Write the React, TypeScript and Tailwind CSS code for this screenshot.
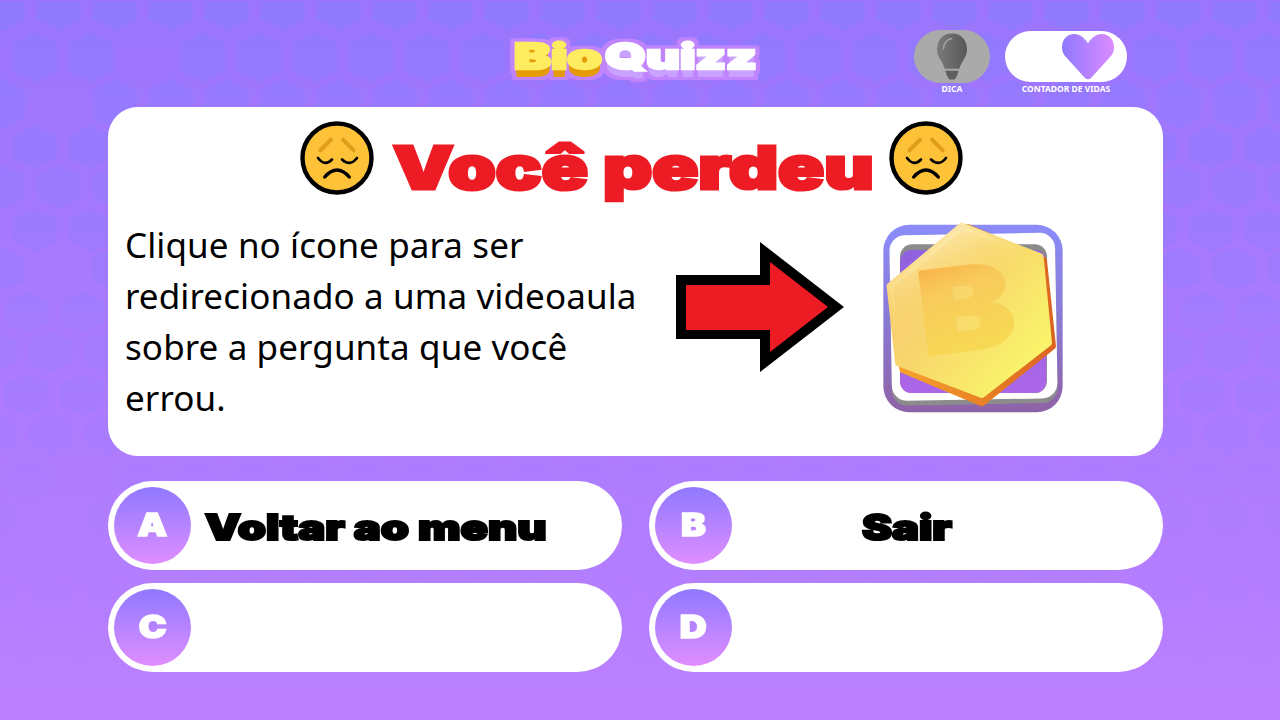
const hexRows: { y: number; h: number; start: number; skip: number[] }[] = [
  { y: 6, h: 50, start: 3, skip: [] },
  { y: 57, h: 50, start: 35, skip: [147] },
  { y: 104, h: 50, start: 3, skip: [59] },
  { y: 147, h: 43, start: 35, skip: [] },
  { y: 187, h: 43, start: 3, skip: [] },
  { y: 230, h: 42, start: 35, skip: [] },
  { y: 269, h: 42, start: 3, skip: [59] },
  { y: 312, h: 41, start: 27, skip: [] },
  { y: 352, h: 41, start: -5, skip: [] },
  { y: 395, h: 41, start: 27, skip: [] },
  { y: 435, h: 41, start: -5, skip: [] },
  { y: 478, h: 41, start: 27, skip: [83] },
  { y: 520, h: 41, start: -5, skip: [51] },
  { y: 560, h: 41, start: 27, skip: [] },
  { y: 602, h: 41, start: -5, skip: [] },
  { y: 644, h: 41, start: 27, skip: [] },
];

function hexPoints(cx: number, cy: number, h: number) {
  const t = cy - h / 2;
  const b = cy + h / 2;
  const s = h * 0.22;
  return `${cx},${t} ${cx + 22},${t + s} ${cx + 22},${b - s} ${cx},${b} ${cx - 22},${b - s} ${cx - 22},${t + s}`;
}

function HexBackground() {
  const hexes: string[] = [];
  hexRows.forEach((row) => {
    for (let x = row.start; x < 1310; x += 56) {
      if (!row.skip.includes(x)) hexes.push(hexPoints(x, row.y, row.h));
    }
  });
  return (
    <svg className="absolute inset-0" width="1280" height="720" viewBox="0 0 1280 720">
      <defs>
        <linearGradient id="hexFade" gradientUnits="userSpaceOnUse" x1="0" y1="0" x2="0" y2="680">
          <stop offset="0" stopColor="#877cff" stopOpacity="0.6" />
          <stop offset="0.55" stopColor="#9a7cff" stopOpacity="0.36" />
          <stop offset="1" stopColor="#ab7dff" stopOpacity="0" />
        </linearGradient>
        <clipPath id="hexClip">
          <rect x="0" y="2" width="1280" height="718" />
        </clipPath>
      </defs>
      <g clipPath="url(#hexClip)" fill="url(#hexFade)">
        {hexes.map((p) => (
          <polygon key={p} points={p} />
        ))}
      </g>
    </svg>
  );
}

function Logo() {
  return (
    <div className="mt-[39px] ml-[406px] h-[46px] w-[241px] flex items-start font-['Inter',sans-serif] font-black text-[35px] leading-[35px] [-webkit-text-stroke:2.5px_currentColor] [filter:drop-shadow(4px_0_0_#c084fc)_drop-shadow(-4px_0_0_#c084fc)_drop-shadow(0_-3px_0_#c084fc)_drop-shadow(0_3px_0_#c084fc)]">
      <div className="w-[91px] shrink-0">
        <span className="inline-block origin-left scale-x-[1.58] text-[#fdec60] [text-shadow:0_2px_0_#e59a08,0_4px_0_#e59a08,0_6px_0_#e59a08,0_8px_0_#e59a08]">Bio</span>
      </div>
      <div className="shrink-0">
        <span className="inline-block origin-left scale-x-[1.49] text-white [text-shadow:0_2px_0_#c9a2ff,0_4px_0_#c9a2ff,0_6px_0_#c9a2ff,0_8px_0_#c9a2ff]">Quizz</span>
      </div>
    </div>
  );
}

function Bulb() {
  return (
    <svg width="76" height="53" viewBox="42 30 228 158">
      <defs>
        <linearGradient id="bulbFill" x1="0" y1="0" x2="1" y2="0">
          <stop offset="0" stopColor="#7b7b7b" />
          <stop offset="1" stopColor="#575757" />
        </linearGradient>
      </defs>
      <path d="M156 40C126 40 111 62 111 88C111 112 128 122 134 146L178 146C184 122 201 112 201 88C201 62 186 40 156 40Z" fill="url(#bulbFill)" />
      <path d="M136 152H176L172 165L164 178H148L140 165Z" fill="#5f5f5f" />
      <path d="M130 86Q132 60 155 55" fill="none" stroke="#a3a3a3" strokeWidth="4" strokeLinecap="round" />
    </svg>
  );
}

function Heart() {
  return (
    <svg width="52" height="46" viewBox="0 0 154 136">
      <defs>
        <linearGradient id="heartFill" x1="0" y1="0" x2="1" y2="0">
          <stop offset="0" stopColor="#8f78ff" />
          <stop offset="1" stopColor="#dc8cff" />
        </linearGradient>
      </defs>
      <path d="M77 28C65 8 50 0 36 0C15 0 0 17 0 40C0 55 8 65 15 72L68 130Q77 138 86 130L139 72C146 65 154 55 154 40C154 17 139 0 118 0C104 0 89 8 77 28Z" fill="url(#heartFill)" />
    </svg>
  );
}

function SadFace() {
  return (
    <svg width="74" height="74" viewBox="0 0 74 74" className="shrink-0">
      <circle cx="37" cy="37" r="34.5" fill="#fdc238" stroke="#000" strokeWidth="4.4" />
      <path d="M20.3 29.3L31 18.7M43 18.7L53.7 29.3" fill="none" stroke="#e09c1a" strokeWidth="4" strokeLinecap="round" />
      <path d="M18 37Q25 46 32 38.5M42 38.5Q50 46 57 37" fill="none" stroke="#000" strokeWidth="2.6" strokeLinecap="round" />
      <path d="M24.7 56Q37 42 49.3 56" fill="none" stroke="#000" strokeWidth="3.4" strokeLinecap="round" />
    </svg>
  );
}

function RedArrow() {
  return (
    <svg width="169" height="130" viewBox="676 242 169 130" className="shrink-0 mt-[21px]">
      <polygon points="676,275 760,275 760,242 844,307 760,372 760,339 676,339" fill="#000" />
      <polygon points="686,285 770,285 770,262 828,307 770,352 770,330 686,330" fill="#ed1c24" />
    </svg>
  );
}

function CoinIcon() {
  const hex = "905,48 1140,140 1165,398 965,553 715,458 690,228";
  return (
    <svg width="187" height="197" viewBox="660 30 560 590" className="shrink-0 ml-[35px] -mt-[1px]">
      <defs>
        <linearGradient id="frame" x1="0" y1="0" x2="0" y2="1">
          <stop offset="0" stopColor="#8b8cfb" />
          <stop offset="0.55" stopColor="#8a78cf" />
          <stop offset="1" stopColor="#8f62a6" />
        </linearGradient>
        <linearGradient id="inner" x1="0" y1="0" x2="0" y2="1">
          <stop offset="0" stopColor="#8f62df" />
          <stop offset="1" stopColor="#ac66e8" />
        </linearGradient>
        <linearGradient id="coinFace" x1="0.1" y1="0.15" x2="0.85" y2="0.8">
          <stop offset="0" stopColor="#f8c878" />
          <stop offset="0.45" stopColor="#f8d66c" />
          <stop offset="1" stopColor="#f9f26a" />
        </linearGradient>
        <linearGradient id="coinTop" x1="0.3" y1="0" x2="0.5" y2="0.45">
          <stop offset="0" stopColor="#fdedbc" stopOpacity="0.95" />
          <stop offset="1" stopColor="#f8da55" stopOpacity="0" />
        </linearGradient>
        <linearGradient id="coinSide" x1="0" y1="0" x2="1" y2="0">
          <stop offset="0" stopColor="#f7a52c" />
          <stop offset="1" stopColor="#dc6420" />
        </linearGradient>
        <linearGradient id="letterFill" x1="0" y1="0" x2="0.15" y2="1">
          <stop offset="0" stopColor="#fb9f38" />
          <stop offset="0.4" stopColor="#f8cb5c" />
          <stop offset="1" stopColor="#f7dc50" />
        </linearGradient>
      </defs>
      <rect x="670" y="44" width="537" height="562" rx="78" fill="url(#frame)" />
      <rect x="692" y="84" width="496" height="498" rx="46" fill="#8c8c8c" transform="rotate(-1 940 330)" />
      <rect x="692" y="72" width="496" height="496" rx="46" fill="#fff" transform="rotate(-1 940 330)" />
      <rect x="720" y="103" width="440" height="445" rx="36" fill="#8b8b8b" />
      <rect x="720" y="120" width="438" height="428" rx="34" fill="url(#inner)" />
      <polygon points="922,52 1150,150 1177,408 965,578 728,478 700,240" fill="url(#coinSide)" stroke="url(#coinSide)" strokeWidth="20" strokeLinejoin="round" />
      <polygon points={hex} fill="url(#coinFace)" stroke="url(#coinFace)" strokeWidth="20" strokeLinejoin="round" />
      <polygon points={hex} fill="url(#coinTop)" stroke="url(#coinTop)" strokeWidth="20" strokeLinejoin="round" />
      <text
        x="0"
        y="0"
        fontFamily="Inter, sans-serif"
        fontWeight="900"
        fontSize="330"
        fill="url(#letterFill)"
        stroke="url(#letterFill)"
        strokeWidth="8"
        strokeLinejoin="round"
        transform="translate(790 436) rotate(-7) scale(1.3 1.04)"
      >
        B
      </text>
    </svg>
  );
}

function OptionButton({ letter, label, textClass }: { letter: string; label?: string; textClass?: string }) {
  return (
    <div className="flex items-center h-[89px] rounded-full bg-white pl-[6px] overflow-hidden">
      <div className="shrink-0 w-[77px] h-[77px] rounded-full bg-gradient-to-b from-[#8f78ff] to-[#df8dff] flex items-center justify-center text-white font-['Inter',sans-serif] font-black text-[31px] [-webkit-text-stroke:1.5px_#fff]">
        <span className="inline-block scale-x-[1.2]">{letter}</span>
      </div>
      {label && (
        <span className={`inline-block origin-left scale-x-[1.29] pt-[3px] text-black font-['Inter',sans-serif] font-black text-[35px] leading-none whitespace-nowrap [-webkit-text-stroke:2.2px_#000] ${textClass}`}>
          {label}
        </span>
      )}
    </div>
  );
}

export default function App() {
  return (
    <div className="relative w-[1280px] h-[720px] overflow-hidden bg-gradient-to-b from-[#9b75fd] to-[#bb80ff]">
      <HexBackground />
      <div className="relative w-[1055px] ml-[108px]">
        <header className="flex items-start h-[107px]">
          <Logo />
          <div className="ml-[159px] mt-[30px] w-[76px] flex flex-col items-center">
            <div className="w-[76px] h-[53px] rounded-full bg-[#aaaaaa]">
              <Bulb />
            </div>
            <span className="text-white text-[8.5px] leading-[11px] font-bold font-['Noto_Sans',sans-serif]">DICA</span>
          </div>
          <div className="ml-[15px] mt-[31px] w-[122px] flex flex-col items-center">
            <div className="w-[122px] h-[51px] rounded-full bg-white flex items-center justify-end pr-[13px]">
              <Heart />
            </div>
            <span className="mt-[1px] text-white text-[8.5px] leading-[11px] font-bold font-['Noto_Sans',sans-serif] whitespace-nowrap">CONTADOR DE VIDAS</span>
          </div>
        </header>

        <section className="h-[349px] rounded-[30px] bg-white pt-[14px]">
          <div className="flex items-start justify-center pr-[8px]">
            <SadFace />
            <h1 className="ml-[19px] mr-[16px] mt-[22px] w-[480px] shrink-0 text-[#ed1c24] font-['Inter',sans-serif] font-black text-[59px] leading-[50px] whitespace-nowrap [-webkit-text-stroke:3.2px_#ed1c24]">
              <span className="inline-block origin-left scale-x-[1.29]">Você perdeu</span>
            </h1>
            <SadFace />
          </div>
          <div className="flex items-start mt-[26px] pl-[17px]">
            <p className="w-[551px] shrink-0 -mt-[2px] text-black font-['Noto_Sans',sans-serif] text-[35px] tracking-[0.1px] leading-[51px]">
              Clique no ícone para ser
              <br />
              redirecionado a uma videoaula
              <br />
              sobre a pergunta que você
              <br />
              errou.
            </p>
            <RedArrow />
            <CoinIcon />
          </div>
        </section>

        <div className="grid grid-cols-2 gap-x-[27px] gap-y-[13px] mt-[25px]">
          <OptionButton letter="A" label="Voltar ao menu" textClass="ml-[14px]" />
          <OptionButton letter="B" label="Sair" textClass="ml-[130px]" />
          <OptionButton letter="C" />
          <OptionButton letter="D" />
        </div>
      </div>
    </div>
  );
}
